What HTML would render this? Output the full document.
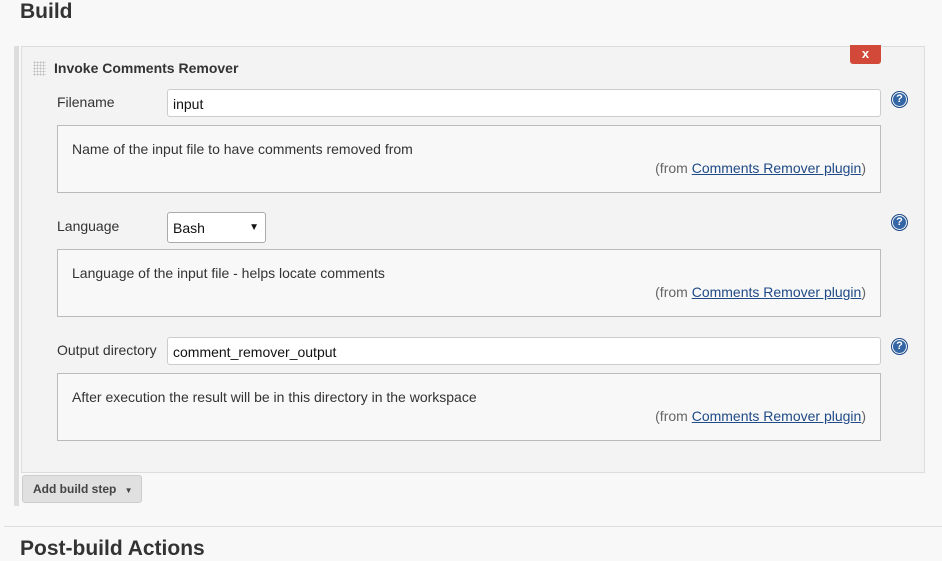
<!DOCTYPE html>
<html><head><style>
body{margin:0;width:942px;height:545px;background:#f8f8f8;font-family:"Liberation Sans",Arial,sans-serif;position:relative;overflow:hidden;color:#333}
.a{position:absolute}
h1{position:absolute;left:20px;top:0px;margin:0;font-size:21px;font-weight:bold;color:#333}
.bar{left:14px;top:46px;width:5px;height:460px;background:#ddd}
.panel{left:21px;top:46px;width:902px;height:425px;background:#f3f3f3;border:1px solid #ddd}
.lbl{font-size:14px;color:#333}
.inp{background:#fff;border:1px solid #ccc;border-radius:3px;height:28px;box-sizing:border-box;font-size:14px;padding:6px 5px 0;color:#111}
.desc{background:#f8f8f8;border:1px solid #bbb;box-sizing:border-box;font-size:14px;color:#333}
.desc .t{position:absolute;left:14px;top:15px}
.desc .f{position:absolute;right:14px;top:34px;color:#666}
.desc .f u{color:#204a87}
.q{width:15px;height:15px;border-radius:50%;background:#3465a4;border:1px solid #204a87;box-shadow:inset 0 0 0 1px #fff;color:#fff;font-size:11px;font-weight:bold;text-align:center;line-height:15px}
</style></head><body>
<h1>Build</h1>
<div class="a bar"></div>
<div class="a panel"></div>
<div class="a" style="left:33px;top:61px;width:13px;height:15px;background-image:radial-gradient(#bbb 40%,transparent 45%);background-size:3px 3px"></div>
<div class="a" style="left:54px;top:60px;font-size:14px;font-weight:bold;color:#333">Invoke Comments Remover</div>
<div class="a" style="left:850px;top:45px;width:31px;height:19px;background:#d24939;border-radius:0 0 3px 3px;color:#fff;font-weight:bold;font-size:13px;text-align:center;line-height:18px">x</div>

<div class="a lbl" style="left:57px;top:94px">Filename</div>
<div class="a inp" style="left:167px;top:89px;width:714px">input</div>
<div class="a q" style="left:891px;top:91px">?</div>
<div class="a desc" style="left:57px;top:125px;width:824px;height:68px"><span class="t">Name of the input file to have comments removed from</span><span class="f">(from <u>Comments Remover plugin</u>)</span></div>

<div class="a lbl" style="left:57px;top:218px">Language</div>
<div class="a inp" style="left:167px;top:212px;width:99px;height:31px;border-color:#aaa;padding:7px 5px">Bash<span style="position:absolute;right:6px;top:9px;font-size:10px">▼</span></div>
<div class="a q" style="left:891px;top:214px">?</div>
<div class="a desc" style="left:57px;top:249px;width:824px;height:68px"><span class="t">Language of the input file - helps locate comments</span><span class="f">(from <u>Comments Remover plugin</u>)</span></div>

<div class="a lbl" style="left:57px;top:342px">Output directory</div>
<div class="a inp" style="left:167px;top:337px;width:714px">comment_remover_output</div>
<div class="a q" style="left:891px;top:338px">?</div>
<div class="a desc" style="left:57px;top:373px;width:824px;height:68px"><span class="t">After execution the result will be in this directory in the workspace</span><span class="f">(from <u>Comments Remover plugin</u>)</span></div>

<div class="a" style="left:22px;top:475px;width:120px;height:28px;box-sizing:border-box;background:#e0e0e0;border:1px solid #ccc;border-radius:3px;font-size:12px;font-weight:bold;color:#444;padding:6px 0 0 10px;white-space:nowrap">Add build step <span style="font-size:8px;margin-left:5px">▼</span></div>
<div class="a" style="left:4px;top:526px;width:938px;height:1px;background:#ddd"></div>
<div class="a" style="left:20px;top:537px;font-size:21px;font-weight:bold;color:#333">Post-build Actions</div>
</body></html>
